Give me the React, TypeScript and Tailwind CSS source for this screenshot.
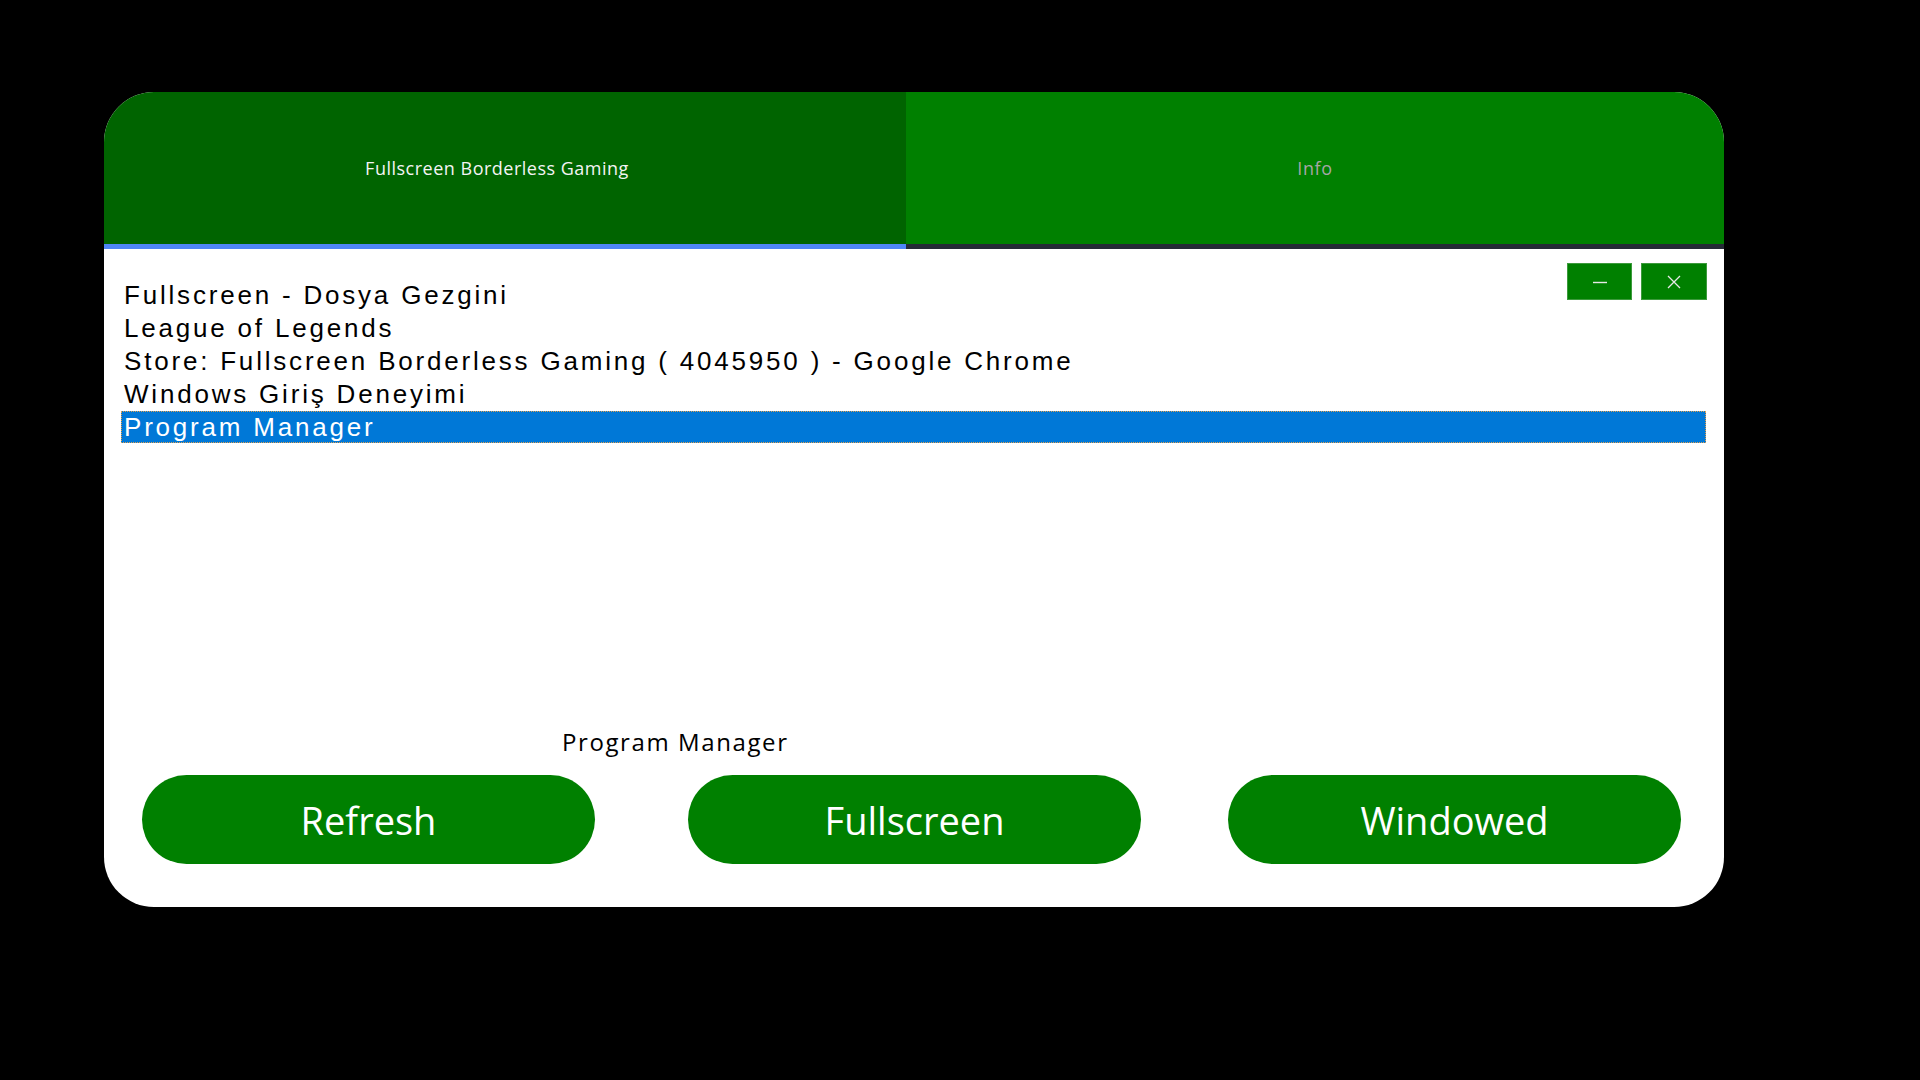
import React from 'react'

const windows = [
  'Fullscreen - Dosya Gezgini',
  'League of Legends',
  'Store: Fullscreen Borderless Gaming ( 4045950 ) - Google Chrome',
  'Windows Giriş Deneyimi',
  'Program Manager',
]

const segoe = { fontFamily: '"Open Sans", "Noto Sans", sans-serif' }
const msSans = { fontFamily: '"Liberation Sans", Arial, sans-serif' }

function PillButton({ label, className }: { label: string; className?: string }) {
  return (
    <button
      className={`h-[89px] w-[453px] rounded-full bg-[#008000] pt-[2px] text-[38px] text-white ${className ?? ''}`}
      style={segoe}
    >
      {label}
    </button>
  )
}

export default function App() {
  const selected = 4

  return (
    <div className="h-screen w-full bg-black pl-[104px] pt-[92px]">
      <div className="relative flex h-[815px] w-[1620px] flex-col overflow-hidden rounded-[50px] bg-white">
        {/* tabs */}
        <div className="flex h-[157px] shrink-0">
          <div className="flex w-[802px] flex-col">
            <div className="flex flex-1 items-center justify-center bg-[#006400] pr-[16px]">
              <span className="text-[18px] tracking-[0.5px] text-[#f4f4f4]" style={segoe}>
                Fullscreen Borderless Gaming
              </span>
            </div>
            <div className="h-[5px] bg-[#4f86f7]" />
          </div>
          <div className="flex flex-1 flex-col">
            <div className="flex flex-1 items-center justify-center bg-[#008000]">
              <span className="text-[18px] tracking-[0.6px] text-[#a6a6a6]" style={segoe}>
                Info
              </span>
            </div>
            <div className="h-[5px] bg-[#252a36]" />
          </div>
        </div>

        {/* window controls */}
        <div className="absolute right-[17px] top-[171px] flex gap-[9px]">
          <button className="flex h-[37px] w-[65px] items-center justify-center border border-[#3c9a3c] bg-[#008000]">
            <svg width="16" height="16" viewBox="0 0 16 16">
              <path d="M1 8.5h14" stroke="#e8e8e8" strokeWidth="1.4" />
            </svg>
          </button>
          <button className="flex h-[37px] w-[66px] items-center justify-center border border-[#3c9a3c] bg-[#008000]">
            <svg width="16" height="16" viewBox="0 0 16 16">
              <path d="M2 2l12 12M14 2L2 14" stroke="#e8e8e8" strokeWidth="1.3" />
            </svg>
          </button>
        </div>

        {/* window list */}
        <div className="flex flex-1 flex-col pl-[17px] pr-[18px] pt-[30px]" style={msSans}>
          {windows.map((w, i) => (
            <div
              key={w}
              className={
                i === selected
                  ? 'flex h-[32px] items-center bg-[#0078d7] pl-[3px] text-[26px] tracking-[2.8px] text-white outline-1 outline-dotted outline-[#e0a050] -outline-offset-1'
                  : 'flex h-[33px] items-center pl-[3px] text-[26px] tracking-[2.8px] text-black'
              }
            >
              {w}
            </div>
          ))}
        </div>

        {/* selected label */}
        <div className="flex h-[34px] items-center pl-[458px] text-[24px] tracking-[1.6px] text-black" style={segoe}>
          Program Manager
        </div>

        {/* actions */}
        <div className="flex pb-[43px] pl-[38px] pt-[16px]">
          <PillButton label="Refresh" className="mr-[93px]" />
          <PillButton label="Fullscreen" className="mr-[87px]" />
          <PillButton label="Windowed" />
        </div>
      </div>
    </div>
  )
}
